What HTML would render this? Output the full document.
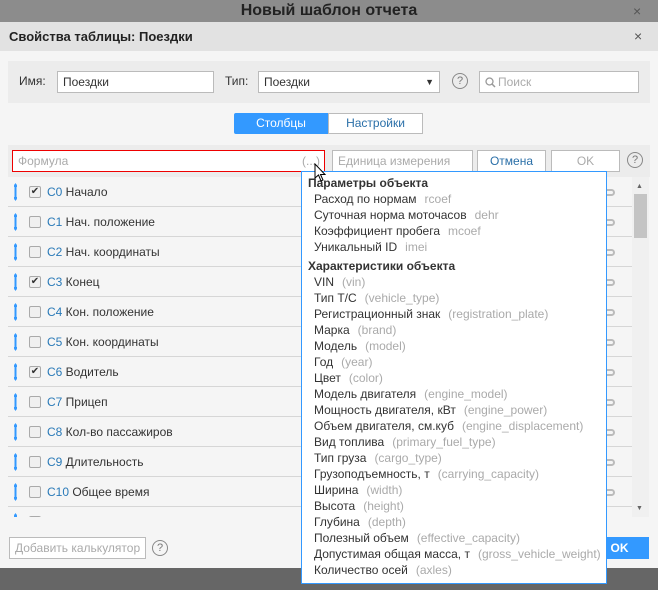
<!DOCTYPE html><html><head><meta charset="utf-8"><style>
*{box-sizing:border-box;margin:0;padding:0}
body{width:658px;height:590px;overflow:hidden;background:#666;font-family:"Liberation Sans",sans-serif;font-size:12px;color:#333;position:relative}
.a{position:absolute}
.top{left:0;top:0;width:658px;height:22px;background:#8c8c8c;text-align:center;font-weight:bold;font-size:16px;line-height:22px;color:#222}
.hd{left:0;top:22px;width:658px;height:29px;background:#e2e2e2;font-weight:bold;font-size:13px;line-height:29px;padding-left:9px;color:#222}
.x{color:#555;font-size:14px}
.body{left:0;top:51px;width:658px;height:517px;background:#f5f5f5}
.inp{background:#fff;border:1px solid #bbb;height:22px;line-height:20px;padding-left:5px}
.ph{color:#aaa}
.q{width:16px;height:16px;border:1px solid #888;border-radius:50%;text-align:center;line-height:14px;font-size:11px;color:#777}
.row{left:8px;width:624px;height:30px;border-bottom:1px solid #d6d6d6;line-height:31px}
.cb{position:absolute;left:21px;top:9px;width:12px;height:12px;border:1px solid #aaa;border-radius:2px;background:#f0f0f0;font-size:10px;line-height:10px;text-align:center;color:#333}
.ar{position:absolute;left:6px;top:6px;width:3px;height:18px}
.lab{position:absolute;left:39px;font-size:12px}
.lab b{font-weight:normal;color:#2a7ab8}
.lk{position:absolute;left:598px;top:12px;width:9px;height:7px;border:2px solid #bbb;border-left:none;border-radius:0 4px 4px 0}
.dd{left:301px;top:171px;width:306px;height:413px;background:#fff;border:1px solid #39f;font-size:12px}
.dd div{height:16px;line-height:16px;padding-left:12px;white-space:nowrap}
.dd .h{padding-left:6px;font-weight:bold;color:#333;height:19px;line-height:22px}
.dd span{color:#aaa;margin-left:8px}
</style></head><body>
<div class="a top">Новый шаблон отчета</div><div class="a x" style="left:633px;top:3px">×</div>
<div class="a hd">Свойства таблицы: Поездки</div><div class="a x" style="left:634px;top:28px">×</div>
<div class="a body"></div>
<div class="a" style="left:8px;top:61px;width:642px;height:42px;background:#ececec"></div>
<div class="a" style="left:19px;top:74px">Имя:</div>
<div class="a inp" style="left:57px;top:71px;width:157px">Поездки</div>
<div class="a" style="left:225px;top:74px">Тип:</div>
<div class="a inp" style="left:258px;top:71px;width:182px">Поездки<span style="position:absolute;right:5px;top:0;font-size:9px">▼</span></div>
<div class="a q" style="left:452px;top:73px">?</div>
<div class="a inp ph" style="left:479px;top:71px;width:160px;padding-left:18px">Поиск<svg class="a" style="left:5px;top:5px" width="11" height="11"><circle cx="4.5" cy="4.5" r="3.5" stroke="#999" fill="none" stroke-width="1.3"/><path d="M7 7L10 10" stroke="#999" stroke-width="1.5"/></svg></div>
<div class="a" style="left:234px;top:113px;width:94px;height:21px;background:#3399ff;color:#fff;text-align:center;line-height:21px;border-radius:2px 0 0 2px">Столбцы</div>
<div class="a" style="left:328px;top:113px;width:95px;height:21px;background:#fff;border:1px solid #bbb;color:#2a6fa8;text-align:center;line-height:19px">Настройки</div>
<div class="a" style="left:8px;top:145px;width:642px;height:32px;background:#ececec"></div>
<div class="a inp ph" style="left:12px;top:150px;width:313px;border-color:#e00">Формула<span style="position:absolute;right:4px">(...)</span></div>
<div class="a inp ph" style="left:332px;top:150px;width:141px">Единица измерения</div>
<div class="a inp" style="left:477px;top:150px;width:69px;text-align:center;padding:0;color:#2a6fa8">Отмена</div>
<div class="a inp ph" style="left:551px;top:150px;width:69px;text-align:center;padding:0">OK</div>
<div class="a q" style="left:627px;top:152px">?</div>
<div class="a" style="left:8px;top:177px;width:624px;height:340px;overflow:hidden">
<div style="position:relative;top:-177px;left:-8px">
<div class="a row" style="top:177px"><svg class="ar" viewBox="0 0 3 18"><path d="M1.5 1V17" stroke="#39f" stroke-width="2"/><path d="M-1 4L1.5 0L4 4ZM-1 14L1.5 18L4 14Z" fill="#39f"/></svg><div class="cb">✔</div><div class="lab"><b>C0</b> Начало</div><div class="lk"></div></div>
<div class="a row" style="top:207px"><svg class="ar" viewBox="0 0 3 18"><path d="M1.5 1V17" stroke="#39f" stroke-width="2"/><path d="M-1 4L1.5 0L4 4ZM-1 14L1.5 18L4 14Z" fill="#39f"/></svg><div class="cb"></div><div class="lab"><b>C1</b> Нач. положение</div><div class="lk"></div></div>
<div class="a row" style="top:237px"><svg class="ar" viewBox="0 0 3 18"><path d="M1.5 1V17" stroke="#39f" stroke-width="2"/><path d="M-1 4L1.5 0L4 4ZM-1 14L1.5 18L4 14Z" fill="#39f"/></svg><div class="cb"></div><div class="lab"><b>C2</b> Нач. координаты</div><div class="lk"></div></div>
<div class="a row" style="top:267px"><svg class="ar" viewBox="0 0 3 18"><path d="M1.5 1V17" stroke="#39f" stroke-width="2"/><path d="M-1 4L1.5 0L4 4ZM-1 14L1.5 18L4 14Z" fill="#39f"/></svg><div class="cb">✔</div><div class="lab"><b>C3</b> Конец</div><div class="lk"></div></div>
<div class="a row" style="top:297px"><svg class="ar" viewBox="0 0 3 18"><path d="M1.5 1V17" stroke="#39f" stroke-width="2"/><path d="M-1 4L1.5 0L4 4ZM-1 14L1.5 18L4 14Z" fill="#39f"/></svg><div class="cb"></div><div class="lab"><b>C4</b> Кон. положение</div><div class="lk"></div></div>
<div class="a row" style="top:327px"><svg class="ar" viewBox="0 0 3 18"><path d="M1.5 1V17" stroke="#39f" stroke-width="2"/><path d="M-1 4L1.5 0L4 4ZM-1 14L1.5 18L4 14Z" fill="#39f"/></svg><div class="cb"></div><div class="lab"><b>C5</b> Кон. координаты</div><div class="lk"></div></div>
<div class="a row" style="top:357px"><svg class="ar" viewBox="0 0 3 18"><path d="M1.5 1V17" stroke="#39f" stroke-width="2"/><path d="M-1 4L1.5 0L4 4ZM-1 14L1.5 18L4 14Z" fill="#39f"/></svg><div class="cb">✔</div><div class="lab"><b>C6</b> Водитель</div><div class="lk"></div></div>
<div class="a row" style="top:387px"><svg class="ar" viewBox="0 0 3 18"><path d="M1.5 1V17" stroke="#39f" stroke-width="2"/><path d="M-1 4L1.5 0L4 4ZM-1 14L1.5 18L4 14Z" fill="#39f"/></svg><div class="cb"></div><div class="lab"><b>C7</b> Прицеп</div><div class="lk"></div></div>
<div class="a row" style="top:417px"><svg class="ar" viewBox="0 0 3 18"><path d="M1.5 1V17" stroke="#39f" stroke-width="2"/><path d="M-1 4L1.5 0L4 4ZM-1 14L1.5 18L4 14Z" fill="#39f"/></svg><div class="cb"></div><div class="lab"><b>C8</b> Кол-во пассажиров</div><div class="lk"></div></div>
<div class="a row" style="top:447px"><svg class="ar" viewBox="0 0 3 18"><path d="M1.5 1V17" stroke="#39f" stroke-width="2"/><path d="M-1 4L1.5 0L4 4ZM-1 14L1.5 18L4 14Z" fill="#39f"/></svg><div class="cb"></div><div class="lab"><b>C9</b> Длительность</div><div class="lk"></div></div>
<div class="a row" style="top:477px"><svg class="ar" viewBox="0 0 3 18"><path d="M1.5 1V17" stroke="#39f" stroke-width="2"/><path d="M-1 4L1.5 0L4 4ZM-1 14L1.5 18L4 14Z" fill="#39f"/></svg><div class="cb"></div><div class="lab"><b>C10</b> Общее время</div><div class="lk"></div></div>
<div class="a row" style="top:507px"><svg class="ar" viewBox="0 0 3 18"><path d="M1.5 1V17" stroke="#39f" stroke-width="2"/><path d="M-1 4L1.5 0L4 4ZM-1 14L1.5 18L4 14Z" fill="#39f"/></svg><div class="cb"></div><div class="lab"><b>C11</b> Время между</div><div class="lk"></div></div>
</div></div>
<div class="a" style="left:632px;top:177px;width:17px;height:340px;background:#f0f0f0"></div>
<div class="a" style="left:634px;top:194px;width:13px;height:44px;background:#c4c4c4"></div>
<div class="a" style="left:636px;top:183px;font-size:7px;color:#666">▲</div>
<div class="a" style="left:636px;top:505px;font-size:7px;color:#666">▼</div>
<div class="a inp ph" style="left:9px;top:537px;width:137px;padding-left:5px">Добавить калькулятор</div>
<div class="a q" style="left:152px;top:540px">?</div>
<div class="a" style="left:590px;top:537px;width:59px;height:22px;background:#3399ff;color:#fff;font-weight:bold;line-height:22px;text-align:center">OK</div>
<div class="a dd">
<div class="h">Параметры объекта</div>
<div>Расход по нормам<span>rcoef</span></div>
<div>Суточная норма моточасов<span>dehr</span></div>
<div>Коэффициент пробега<span>mcoef</span></div>
<div>Уникальный ID<span>imei</span></div>
<div class="h">Характеристики объекта</div>
<div>VIN<span>(vin)</span></div>
<div>Тип Т/С<span>(vehicle_type)</span></div>
<div>Регистрационный знак<span>(registration_plate)</span></div>
<div>Марка<span>(brand)</span></div>
<div>Модель<span>(model)</span></div>
<div>Год<span>(year)</span></div>
<div>Цвет<span>(color)</span></div>
<div>Модель двигателя<span>(engine_model)</span></div>
<div>Мощность двигателя, кВт<span>(engine_power)</span></div>
<div>Объем двигателя, см.куб<span>(engine_displacement)</span></div>
<div>Вид топлива<span>(primary_fuel_type)</span></div>
<div>Тип груза<span>(cargo_type)</span></div>
<div>Грузоподъемность, т<span>(carrying_capacity)</span></div>
<div>Ширина<span>(width)</span></div>
<div>Высота<span>(height)</span></div>
<div>Глубина<span>(depth)</span></div>
<div>Полезный объем<span>(effective_capacity)</span></div>
<div>Допустимая общая масса, т<span>(gross_vehicle_weight)</span></div>
<div>Количество осей<span>(axles)</span></div>
</div>
<svg class="a" style="left:314px;top:163px" width="13" height="19"><path d="M1 1V15L4.5 12L7 18L9 17L6.5 11.5H11Z" fill="#fff" stroke="#000"/></svg>
</body></html>
